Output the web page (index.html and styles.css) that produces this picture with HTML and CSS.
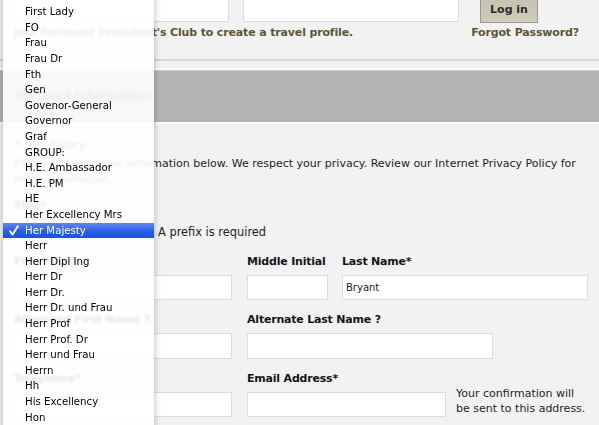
FILE: index.html
```html
<!DOCTYPE html>
<html>
<head>
<meta charset="utf-8">
<link rel="stylesheet" href="styles.css">
</head>
<body>
<div class="page">
  <div class="login-row">
    <div class="login-input w1"></div>
    <div class="login-input w2"></div>
    <div class="login-btn">Log in</div>
  </div>
  <div class="login-links">
    <span class="join">Join Fairmont President's Club to create a travel profile.</span>
    <span class="forgot">Forgot Password?</span>
  </div>
  <div class="rule"></div>
  <div class="section-head">Personal Information</div>
  <div class="content">
    <div class="mandatory">* Mandatory</div>
    <p class="intro">Please provide your information below. We respect your privacy. Review our Internet Privacy Policy for more information.</p>
    <div class="label title-label">Title*</div>
    <div class="prefix-row">
      <div class="select">Her Majesty</div>
      <span class="hint">A prefix is required</span>
    </div>
    <div class="row r1">
      <div class="field f-first"><div class="label">First Name*</div><div class="input"></div></div>
      <div class="field f-mid"><div class="label">Middle Initial</div><div class="input"></div></div>
      <div class="field f-last"><div class="label">Last Name*</div><div class="input">Bryant</div></div>
    </div>
    <div class="row r2">
      <div class="field f-first"><div class="label">Alternate First Name ?</div><div class="input"></div></div>
      <div class="field f-altlast"><div class="label">Alternate Last Name ?</div><div class="input"></div></div>
    </div>
    <div class="row r3">
      <div class="field f-first"><div class="label">Telephone*</div><div class="input"></div></div>
      <div class="field f-email">
        <div class="label">Email Address*</div>
        <div class="input-line"><div class="input"></div><div class="note">Your confirmation will<br>be sent to this address.</div></div>
      </div>
    </div>
  </div>

  <ul class="menu">
    <li>First Lady</li>
    <li>FO</li>
    <li>Frau</li>
    <li>Frau Dr</li>
    <li>Fth</li>
    <li>Gen</li>
    <li>Govenor-General</li>
    <li>Governor</li>
    <li>Graf</li>
    <li>GROUP:</li>
    <li>H.E. Ambassador</li>
    <li>H.E. PM</li>
    <li>HE</li>
    <li>Her Excellency Mrs</li>
    <li class="selected"><svg class="check" width="10" height="11" viewBox="0 0 10 11"><path d="M1 6.2 L3.6 9.6 L8.8 1.2" fill="none" stroke="#fff" stroke-width="1.9" stroke-linecap="round" stroke-linejoin="round"/></svg>Her Majesty</li>
    <li>Herr</li>
    <li>Herr Dipl Ing</li>
    <li>Herr Dr</li>
    <li>Herr Dr.</li>
    <li>Herr Dr. und Frau</li>
    <li>Herr Prof</li>
    <li>Herr Prof. Dr</li>
    <li>Herr und Frau</li>
    <li>Herrn</li>
    <li>Hh</li>
    <li>His Excellency</li>
    <li>Hon</li>
  </ul>
</div>
</body>
</html>
```

FILE: styles.css
```css
* { box-sizing: border-box; }
html, body { margin: 0; padding: 0; }
body {
  background: #f2f2f2;
  font-family: "DejaVu Sans", Verdana, sans-serif;
  font-size: 11.4px;
  color: #1e1e1e;
  overflow: hidden;
  width: 599px;
  height: 425px;
}
.page { position: relative; width: 599px; height: 425px; overflow: hidden; }

.login-row {
  display: flex;
  align-items: flex-start;
  margin-top: -8px;
  padding-left: 13px;
  height: 31px;
}
.login-input {
  flex: none;
  height: 30px;
  background: #fff;
  border: 1px solid #dcdcdc;
}
.login-input.w1 { width: 216px; }
.login-input.w2 { width: 216px; margin-left: 14px; }
.login-btn {
  flex: none;
  margin-left: 21px;
  width: 58px;
  height: 31px;
  padding-top: 11px;
  text-align: center;
  font-weight: bold;
  font-size: 11px;
  color: #2a2a2a;
  background: linear-gradient(#c3c1ac, #cfcdba);
  border: 1px solid #9a988a;
  border-top: none;
}
.login-links {
  display: flex;
  margin-top: 2px;
  height: 16px;
  line-height: 16px;
  padding-left: 14px;
  padding-right: 20px;
  font-weight: bold;
  font-size: 11px;
  letter-spacing: -0.15px;
  color: #5e5633;
}
.forgot { margin-left: auto; }

.rule { margin-top: 18px; height: 2px; background: #d6d6d6; }
.section-head {
  margin-top: 7px;
  height: 56px;
  border-top: 2px solid #fff;
  border-bottom: 2px solid #fbfbfb;
  background: #b4b4b4;
  box-shadow: inset 0 1px 0 #c8c8c8;
  padding-left: 15px;
  line-height: 52px;
  font-weight: bold;
  font-size: 11.4px;
  color: #555;
}

.content { padding: 13px 0 0 14px; }
.mandatory { line-height: 16px; height: 16px; padding-left: 1px; }
.intro { margin: 3px 0 0 0; line-height: 16px; width: 580px; font-size: 11px; }
.label {
  font-weight: bold;
  font-size: 11px;
  letter-spacing: -0.2px;
  line-height: 16px;
  height: 16px;
  color: #151515;
  white-space: nowrap;
}
.title-label { margin-top: 10px; }
.prefix-row { display: flex; align-items: center; margin-top: 9px; height: 17px; }
.select {
  flex: none;
  width: 140px; height: 17px; background: #fff; border: 1px solid #aaa; border-radius: 3px;
  font-size: 10px; line-height: 15px; padding-left: 8px;
}
.hint { margin-left: 4px; }

.row { display: flex; align-items: flex-start; }
.r1 { margin-top: 14px; }
.r2 { margin-top: 12px; }
.r3 { margin-top: 12px; }
.field { flex: none; }
.field .input {
  margin-top: 5px;
  height: 25px;
  background: #fff;
  border: 1px solid #dcdcdc;
  font-size: 10px;
  line-height: 23px;
  padding-left: 3px;
  color: #222;
}
.r2 .field .input { height: 26px; }
.f-first { width: 218px; }
.f-mid { width: 81px; margin-left: 15px; }
.f-last { width: 246px; margin-left: 14px; }
.f-altlast { width: 246px; margin-left: 15px; }
.f-email { margin-left: 15px; }
.input-line { display: flex; align-items: flex-start; }
.input-line .input { width: 199px; flex: none; }
.note {
  flex: none;
  margin-left: 10px;
  margin-top: -1px;
  font-size: 11px;
  line-height: 15px;
  white-space: nowrap;
}

.menu {
  position: absolute;
  left: 3px;
  top: -20px;
  width: 151px;
  margin: 0;
  padding: 24.2px 0 0 0;
  list-style: none;
  background: rgba(255, 255, 255, 0.9);
  backdrop-filter: blur(1.3px);
  box-shadow: 0 2px 7px rgba(0, 0, 0, 0.28);
  font-size: 10.2px;
  color: #000;
  height: 470px;
}
.menu li {
  position: relative;
  height: 15.6px;
  line-height: 15.6px;
  padding-left: 22px;
  white-space: nowrap;
}
.menu li.selected {
  color: #fff;
  background: linear-gradient(#5e87ee, #2a5ee8 55%, #1b51e2);
}
.check { position: absolute; left: 6px; top: 2.6px; }
```
